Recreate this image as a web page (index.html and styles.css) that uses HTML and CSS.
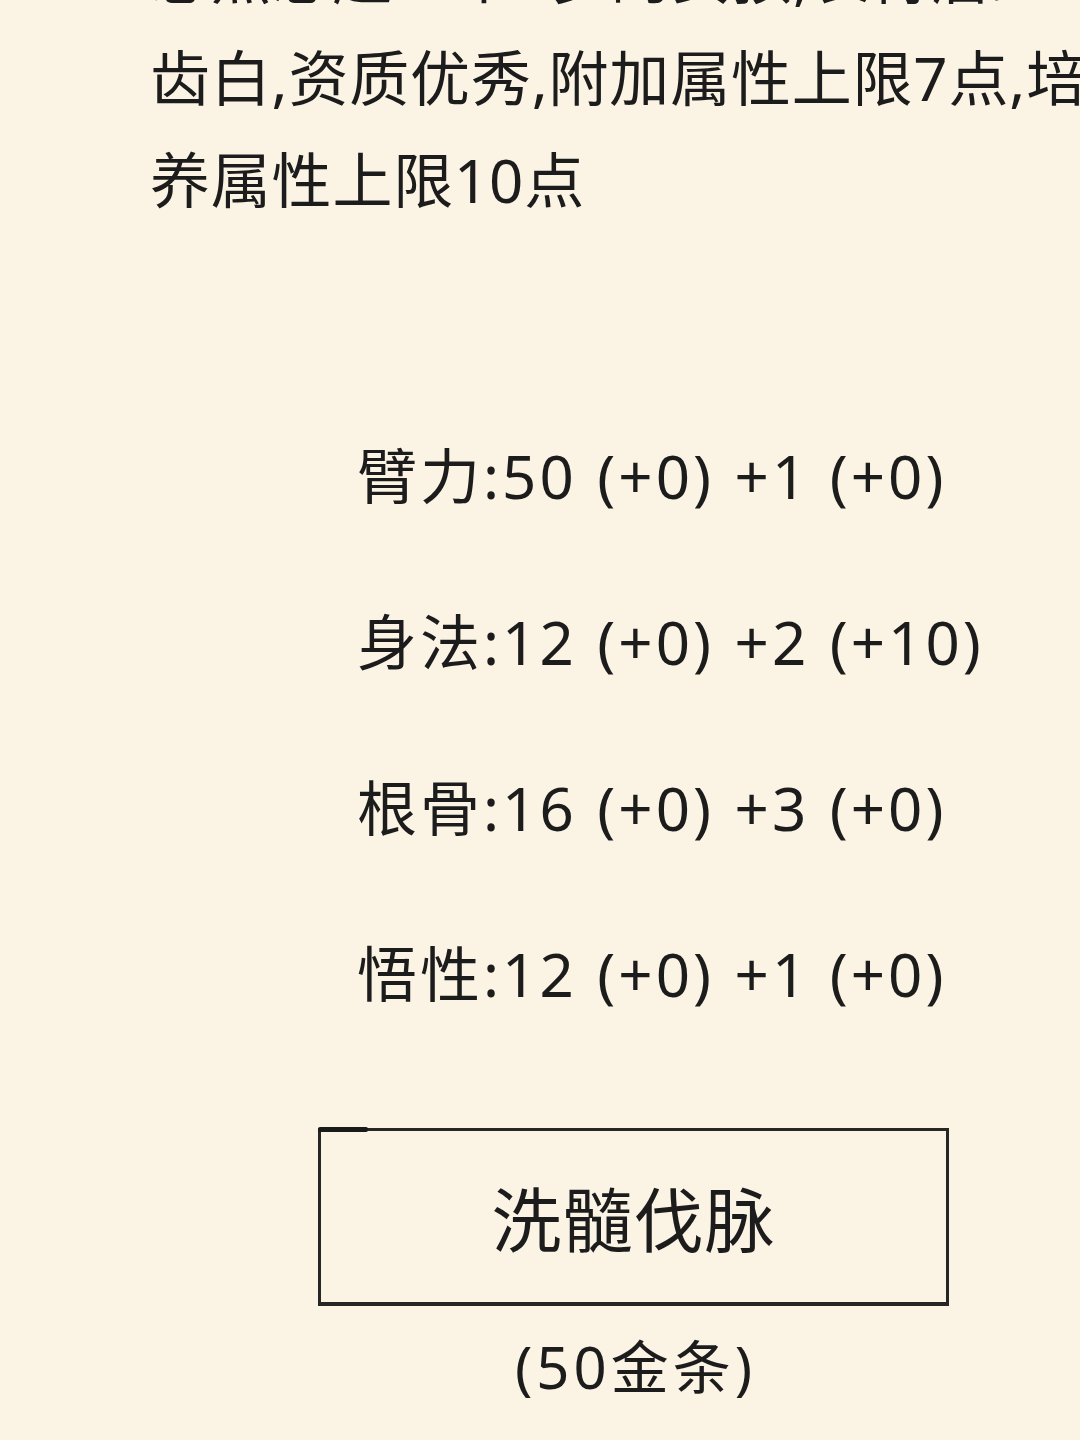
FILE: index.html
```html
<!DOCTYPE html>
<html lang="zh-CN">
<head>
<meta charset="utf-8">
<title>洗髓伐脉</title>
<link rel="stylesheet" href="styles.css">
</head>
<body>
<main class="page">
  <p class="desc">忽然想起一个5岁的女孩,长得唇红<br>齿白,资质优秀,附加属性上限7点,培<br>养属性上限10点</p>
  <ul class="stats">
    <li class="stat">臂力:50 (+0) +1 (+0)</li>
    <li class="stat">身法:12 (+0) +2 (+10)</li>
    <li class="stat">根骨:16 (+0) +3 (+0)</li>
    <li class="stat">悟性:12 (+0) +1 (+0)</li>
  </ul>
  <div class="action">
    <button class="btn" type="button">洗髓伐脉</button>
    <div class="cost">(50金条)</div>
  </div>
</main>
</body>
</html>
```

FILE: styles.css
```css
html, body {
  margin: 0;
  padding: 0;
}
body {
  width: 1080px;
  height: 1440px;
  overflow: hidden;
  background: #fbf4e4;
  color: #1c1c1c;
  font-family: "Noto Sans", "Noto Sans CJK SC", sans-serif;
}
.page {
  display: flex;
  flex-direction: column;
}
.desc {
  margin: -75px 0 0 0;
  padding-left: 150px;
  font-size: 60px;
  line-height: 102px;
  letter-spacing: 0.8px;
  white-space: nowrap;
}
.stats {
  list-style: none;
  margin: 162px 0 0 0;
  padding: 0 0 0 357px;
  display: flex;
  flex-direction: column;
}
.stat {
  font-size: 60px;
  line-height: 166px;
  height: 166px;
  white-space: nowrap;
  letter-spacing: 3px;
  word-spacing: 2px;
}
.action {
  margin: 71px 0 0 318px;
  width: 631px;
  display: flex;
  flex-direction: column;
  align-items: center;
}
.btn {
  position: relative;
  box-sizing: border-box;
  width: 631px;
  height: 178px;
  background: transparent;
  border-style: solid;
  border-color: #262626;
  border-width: 3px 3px 4px 3px;
  border-radius: 0;
  padding: 0;
  font-family: "Noto Sans", "Noto Sans CJK SC", sans-serif;
  font-size: 70px;
  color: #1c1c1c;
  letter-spacing: 1px;
}
.btn::before {
  content: "";
  position: absolute;
  left: -3px;
  top: -4px;
  width: 50px;
  height: 5px;
  background: #1a1a1a;
  border-radius: 2px;
}
.cost {
  margin-top: 26px;
  padding-left: 4px;
  font-size: 58px;
  line-height: 70px;
  letter-spacing: 4px;
}
```
